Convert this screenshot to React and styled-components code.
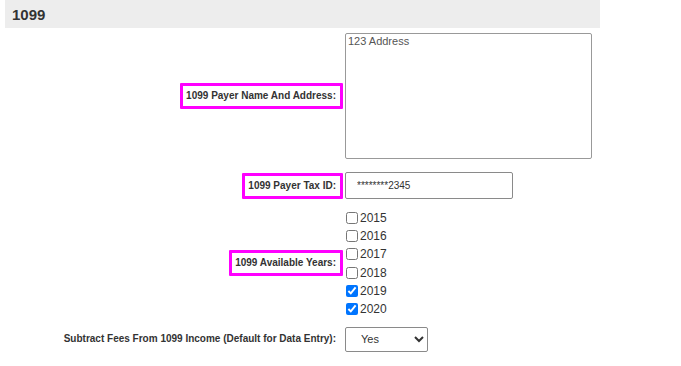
import React from "react";
import styled, { createGlobalStyle } from "styled-components";

const GlobalStyle = createGlobalStyle`
    body {
        margin: 0;
        background: #fff;
        color: #333;
        font-family: "Liberation Sans", Arial, sans-serif;
    }
`;

const Page = styled.div`
    width: 595px;
    margin-left: 5px;
`;

const SectionHeader = styled.h2`
    margin: 0;
    height: 28px;
    padding: 1px 7px 0;
    box-sizing: border-box;
    display: flex;
    align-items: center;
    background: #ededed;
    font-size: 15px;
    font-weight: bold;
    color: #333;
`;

const FieldRow = styled.div`
    display: grid;
    grid-template-columns: 338px 1fr;
    column-gap: 2px;
    align-items: center;
    margin-top: ${({ $gap }) => $gap}px;
`;

const LabelCell = styled.div`
    display: flex;
    justify-content: flex-end;
`;

const Label = styled.span`
    font-size: 10px;
    line-height: 12px;
    font-weight: bold;
    color: #333;
    white-space: nowrap;
    padding: 4px 4px 4px 3px;
    border: 3px solid ${({ $marked }) => ($marked ? "#ff00ff" : "transparent")};
    border-radius: 1px;
`;

const AddressBox = styled.textarea`
    display: block;
    box-sizing: border-box;
    width: 247px;
    height: 126px;
    margin: 0;
    padding: 1px 2px;
    border: 1px solid #999;
    border-radius: 2px;
    resize: none;
    font-family: "Liberation Sans", Arial, sans-serif;
    font-size: 11px;
    color: #555;
`;

const TextInput = styled.input`
    display: block;
    box-sizing: border-box;
    width: 168px;
    height: 27px;
    margin: 0;
    padding: 0 11px;
    border: 1px solid #8a8a8a;
    border-radius: 2px;
    font-family: "Liberation Sans", Arial, sans-serif;
    font-size: 10px;
    color: #333;
`;

const YearList = styled.div`
    display: flex;
    flex-direction: column;
    padding-top: 1px;
`;

const YearItem = styled.label`
    display: flex;
    align-items: center;
    height: 18.2px;
    font-size: 12px;
    color: #333;
`;

const Checkbox = styled.input`
    width: 12px;
    height: 12px;
    margin: 0 2px 0 1px;
    accent-color: #0075ff;
`;

const Select = styled.select`
    box-sizing: border-box;
    width: 83px;
    height: 25px;
    margin: 0;
    padding: 0 0 0 11px;
    border: 1px solid #8a8a8a;
    border-radius: 2px;
    background: #fff;
    font-family: "Liberation Sans", Arial, sans-serif;
    font-size: 11px;
    color: #333;
`;

const years = [
    { year: 2015, checked: false },
    { year: 2016, checked: false },
    { year: 2017, checked: false },
    { year: 2018, checked: false },
    { year: 2019, checked: true },
    { year: 2020, checked: true },
];

const App = () => {
    return (
        <Page>
            <GlobalStyle />
            <SectionHeader>1099</SectionHeader>

            <FieldRow $gap={5}>
                <LabelCell>
                    <Label $marked>1099 Payer Name And Address:</Label>
                </LabelCell>
                <div>
                    <AddressBox defaultValue="123 Address" />
                </div>
            </FieldRow>

            <FieldRow $gap={13}>
                <LabelCell>
                    <Label $marked>1099 Payer Tax ID:</Label>
                </LabelCell>
                <div>
                    <TextInput type="text" defaultValue="********2345" />
                </div>
            </FieldRow>

            <FieldRow $gap={9}>
                <LabelCell>
                    <Label $marked>1099 Available Years:</Label>
                </LabelCell>
                <YearList>
                    {years.map(({ year, checked }) => (
                        <YearItem key={year}>
                            <Checkbox type="checkbox" defaultChecked={checked} />
                            {year}
                        </YearItem>
                    ))}
                </YearList>
            </FieldRow>

            <FieldRow $gap={8}>
                <LabelCell>
                    <Label>Subtract Fees From 1099 Income (Default for Data Entry):</Label>
                </LabelCell>
                <div>
                    <Select defaultValue="Yes">
                        <option>Yes</option>
                        <option>No</option>
                    </Select>
                </div>
            </FieldRow>
        </Page>
    );
};

export default App;
